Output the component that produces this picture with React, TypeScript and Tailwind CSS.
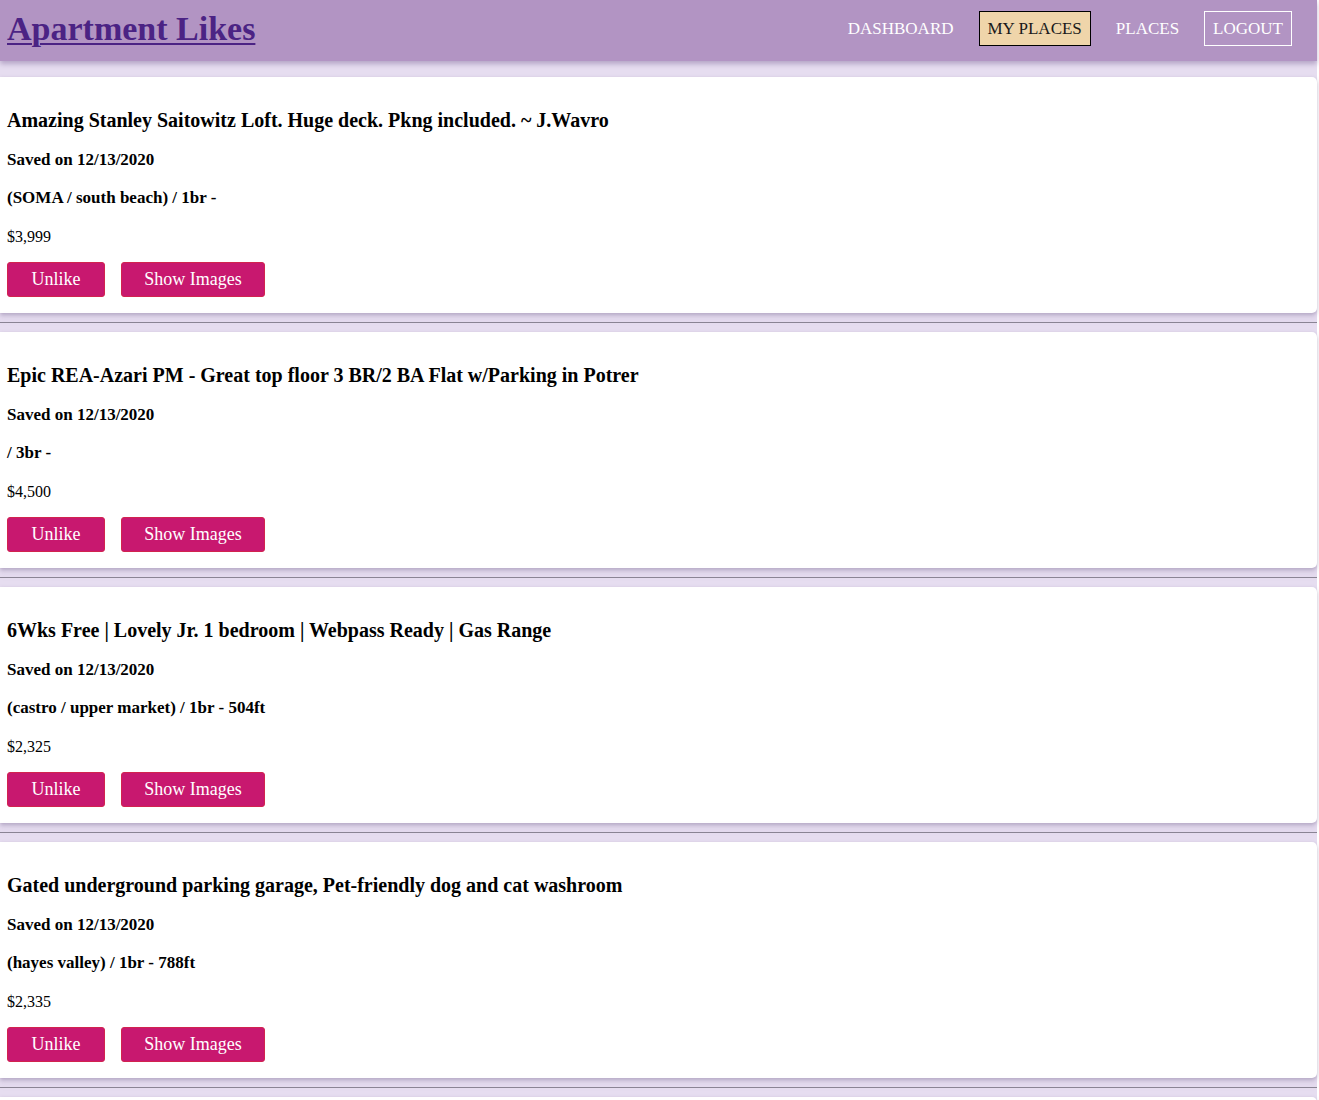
const places = [
  {
    title: "Amazing Stanley Saitowitz Loft. Huge deck. Pkng included. ~ J.Wavro",
    saved: "12/13/2020",
    area: "(SOMA / south beach) / 1br -",
    price: "$3,999",
  },
  {
    title: "Epic REA-Azari PM - Great top floor 3 BR/2 BA Flat w/Parking in Potrer",
    saved: "12/13/2020",
    area: "/ 3br -",
    price: "$4,500",
  },
  {
    title: "6Wks Free | Lovely Jr. 1 bedroom | Webpass Ready | Gas Range",
    saved: "12/13/2020",
    area: "(castro / upper market) / 1br - 504ft",
    price: "$2,325",
  },
  {
    title: "Gated underground parking garage, Pet-friendly dog and cat washroom",
    saved: "12/13/2020",
    area: "(hayes valley) / 1br - 788ft",
    price: "$2,335",
  },
  {
    title: "Sunny 2 BR with in-unit laundry",
    saved: "12/13/2020",
    area: "(mission district) / 2br -",
    price: "$3,200",
  },
];

function PlaceCard({ place }: { place: (typeof places)[number] }) {
  return (
    <div className="rounded-r-[5px] bg-white px-[7px] pt-[32px] pb-[16px] shadow-[0_2px_4px_rgba(80,60,110,0.35)]">
      <h3 className="text-[20px] font-bold leading-[22px] text-black">{place.title}</h3>
      <p className="mt-[20px] text-[17px] font-bold leading-[18px]">Saved on {place.saved}</p>
      <p className="mt-[20px] text-[17px] font-bold leading-[18px]">{place.area}</p>
      <p className="mt-[21px] text-[16px] leading-[18px]">{place.price}</p>
      <div className="mt-[16px] flex gap-4">
        <button className="h-[35px] w-[98px] rounded-[3px] border border-[#d2234f] bg-[#c8186f] text-[18px] text-white">
          Unlike
        </button>
        <button className="h-[35px] w-[144px] rounded-[3px] border border-[#d2234f] bg-[#c8186f] text-[18px] text-white">
          Show Images
        </button>
      </div>
    </div>
  );
}

export default function App() {
  return (
    <div
      className="min-h-screen w-[1317px] bg-[#e6ddf0] pb-8 text-black"
      style={{ fontFamily: '"Liberation Serif", serif' }}
    >
      <header className="flex h-[61px] items-center justify-between bg-[#b294c3] pb-[4px] pl-[7px] pr-[25px] shadow-[0_3px_5px_rgba(90,60,120,0.35)]">
        <a href="#" className="text-[34px] font-bold text-[#4b2384] underline decoration-2 underline-offset-[3px]">
          Apartment Likes
        </a>
        <nav className="flex items-center gap-[25px] text-[17px]">
          <a href="#" className="text-white">DASHBOARD</a>
          <a href="#" className="flex h-[35px] items-center border border-black bg-[#efd5aa] px-[8px] text-[#1a1a1a]">
            MY PLACES
          </a>
          <a href="#" className="text-white">PLACES</a>
          <a href="#" className="flex h-[35px] items-center border border-white px-[8px] text-white">
            LOGOUT
          </a>
        </nav>
      </header>
      <main className="pt-4">
        {places.map((p, i) => (
          <div key={i}>
            <PlaceCard place={p} />
            <hr className="my-[9px] border-t border-[#8a8494] shadow-[0_-4px_6px_rgba(120,100,150,0.25)]" />
          </div>
        ))}
      </main>
    </div>
  );
}
